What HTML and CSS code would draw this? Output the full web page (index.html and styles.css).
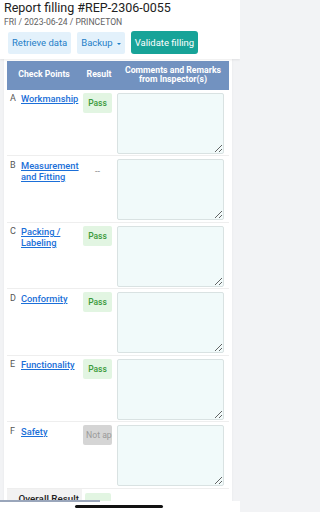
FILE: index.html
```html
<!DOCTYPE html>
<html lang="en">
<head>
<meta charset="utf-8">
<meta name="viewport" content="width=240, initial-scale=1">
<title>Report filling</title>
<link rel="stylesheet" href="styles.css">
</head>
<body>
<div class="page">
<header class="top">
  <h1 class="title">Report filling #REP-2306-0055</h1>
  <div class="sub">FRI / 2023-06-24 / PRINCETON</div>
  <div class="actions">
    <button class="btn btn-light">Retrieve data</button>
    <button class="btn btn-light">Backup<span class="caret"></span></button>
    <button class="btn btn-teal">Validate filling</button>
  </div>
</header>
<main class="content">
  <section class="card">
    <div class="thead">
      <div class="th">Check Points</div>
      <div class="th">Result</div>
      <div class="th">Comments and Remarks<br>from Inspector(s)</div>
    </div>
    <div class="row">
      <div class="cp"><span class="letter">A</span><a class="link" href="#">Workmanship</a></div>
      <div class="res"><span class="badge pass">Pass</span></div>
      <div class="com"><textarea></textarea></div>
    </div>
    <div class="row">
      <div class="cp"><span class="letter">B</span><a class="link" href="#">Measurement and Fitting</a></div>
      <div class="res"><span class="dash">--</span></div>
      <div class="com"><textarea></textarea></div>
    </div>
    <div class="row">
      <div class="cp"><span class="letter">C</span><a class="link" href="#">Packing / Labeling</a></div>
      <div class="res"><span class="badge pass">Pass</span></div>
      <div class="com"><textarea></textarea></div>
    </div>
    <div class="row">
      <div class="cp"><span class="letter">D</span><a class="link" href="#">Conformity</a></div>
      <div class="res"><span class="badge pass">Pass</span></div>
      <div class="com"><textarea></textarea></div>
    </div>
    <div class="row">
      <div class="cp"><span class="letter">E</span><a class="link" href="#">Functionality</a></div>
      <div class="res"><span class="badge pass">Pass</span></div>
      <div class="com"><textarea></textarea></div>
    </div>
    <div class="row">
      <div class="cp"><span class="letter">F</span><a class="link" href="#">Safety</a></div>
      <div class="res"><span class="badge na">Not applicable</span></div>
      <div class="com"><textarea></textarea></div>
    </div>
    <div class="overall">
      <div class="ov-label">Overall Result</div>
      <div class="ov-res"><span class="badge pass ov-badge">Pass</span></div>
    </div>
  </section>
</main>
<div class="bottom">
  <div class="scroll-thumb"></div>
  <div class="home"></div>
</div>
</div>
</body>
</html>
```

FILE: styles.css
```css
* { box-sizing: border-box; }
html, body {
  margin: 0;
  padding: 0;
  height: 512px;
  overflow: hidden;
  background: #f2f3f5;
}
body {
  font-family: Roboto, "Liberation Sans", Arial, sans-serif;
  color: #222;
}
.page {
  position: relative;
  width: 240px;
  height: 512px;
  overflow: hidden;
  background: #f2f3f5;
}
.top {
  background: #fff;
  padding: 0 4px 5px 4px;
  box-shadow: 0 1px 2px rgba(0,0,0,0.08);
  position: relative;
  z-index: 1;
}
.title {
  margin: 0;
  font-size: 12.5px;
  line-height: 16px;
  font-weight: 400;
  color: #212121;
}
.sub {
  margin-top: 1px;
  font-size: 8.6px;
  line-height: 11px;
  color: #616161;
}
.actions {
  display: flex;
  gap: 6px;
  margin-top: 4px;
  padding-left: 4px;
}
.btn {
  font-family: inherit;
  font-size: 9.5px;
  height: 22px;
  border: none;
  border-radius: 2px;
  padding: 0 4px;
  line-height: 22px;
  display: flex;
  align-items: center;
}
.btn-light {
  background: #e3f1fb;
  color: #1f7fc8;
}
.btn-teal {
  background: #17a398;
  color: #fff;
  border-radius: 3px;
  height: 23px;
  margin-top: -1px;
}
.caret {
  display: inline-block;
  width: 0;
  height: 0;
  border-left: 2px solid transparent;
  border-right: 2px solid transparent;
  border-top: 2.5px solid #1f7fc8;
  margin-left: 4px;
  margin-top: 1px;
}
.content {
  padding: 0 8px 0 4px;
}
.card {
  background: #fff;
  padding: 1.5px 3px 0 3px;
  box-shadow: 0 0 2px rgba(0,0,0,0.06);
}
.thead, .row, .overall {
  display: grid;
  grid-template-columns: 74px 36px 1fr;
}
.thead {
  background: #7292c0;
  color: #fff;
  height: 29px;
}
.th {
  display: flex;
  align-items: center;
  justify-content: center;
  text-align: center;
  font-weight: 700;
  font-size: 8.7px;
  line-height: 9.5px;
}
.row {
  border-bottom: 1px solid #eeeeee;
  padding-top: 3px;
  padding-bottom: 1.5px;
}
.cp {
  display: flex;
  align-items: flex-start;
  padding: 0.5px 0 0 3px;
  font-size: 9.3px;
  line-height: 11px;
}
.letter {
  flex: 0 0 11px;
  color: #555;
  font-size: 9px;
}
.link {
  color: #1b6fd8;
  font-weight: 500;
  text-decoration: underline;
  text-underline-offset: 1px;
}
.res {
  padding-left: 2px;
  display: flex;
  justify-content: flex-start;
  align-items: flex-start;
}
.badge {
  display: block;
  width: 29px;
  height: 20px;
  line-height: 20px;
  font-size: 8.5px;
  font-weight: 500;
  text-align: center;
  white-space: nowrap;
  overflow: hidden;
  border-radius: 2px;
  padding: 0 3px;
}
.pass {
  background: #e2f5e2;
  color: #3a9a3a;
}
.na {
  background: #d5d5d5;
  color: #9a9a9a;
  font-weight: 400;
  font-size: 8.7px;
  text-align: left;
}
.dash {
  display: block;
  width: 29px;
  text-align: center;
  color: #888;
  font-size: 9px;
  line-height: 14px;
  padding-top: 5px;
}
.com {
  display: flex;
}
textarea {
  display: block;
  width: 107px;
  height: 61px;
  background: #f1fafa;
  border: 1px solid #d9e2e2;
  border-radius: 2px;
  margin: 0;
  padding: 2px;
  font-family: inherit;
  font-size: 9px;
}
.overall {
  height: 30px;
}
.ov-label {
  background: #f2f2f2;
  font-size: 9.8px;
  font-weight: 500;
  color: #222;
  text-align: right;
  padding: 4px 3px 0 0;
  margin-right: -1px;
}
.ov-res {
  padding: 4.5px 0 0 4px;
}
.ov-badge {
  width: 26px;
  color: #9bd39b;
  font-size: 7px;
}
.bottom {
  position: absolute;
  left: 0;
  right: 0;
  bottom: 0;
  height: 11px;
  background: #fff;
  z-index: 5;
}
.scroll-thumb {
  position: absolute;
  left: 0;
  top: -1px;
  width: 100px;
  height: 2px;
  background: #9aa6bb;
}
.home {
  position: absolute;
  left: 75px;
  top: 4px;
  width: 88px;
  height: 2.5px;
  border-radius: 2px;
  background: #111;
}
```
